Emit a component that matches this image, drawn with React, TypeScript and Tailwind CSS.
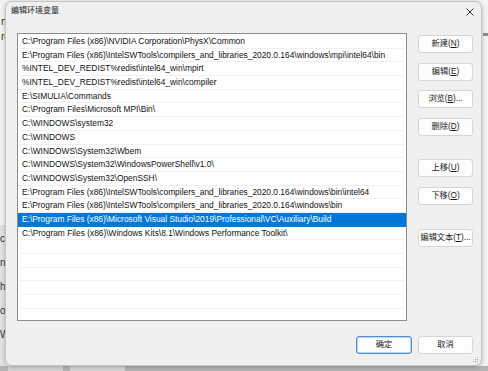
import React from 'react';

const paths = [
  'C:\\Program Files (x86)\\NVIDIA Corporation\\PhysX\\Common',
  'E:\\Program Files (x86)\\IntelSWTools\\compilers_and_libraries_2020.0.164\\windows\\mpi\\intel64\\bin',
  '%INTEL_DEV_REDIST%redist\\intel64_win\\mpirt',
  '%INTEL_DEV_REDIST%redist\\intel64_win\\compiler',
  'E:\\SIMULIA\\Commands',
  'C:\\Program Files\\Microsoft MPI\\Bin\\',
  'C:\\WINDOWS\\system32',
  'C:\\WINDOWS',
  'C:\\WINDOWS\\System32\\Wbem',
  'C:\\WINDOWS\\System32\\WindowsPowerShell\\v1.0\\',
  'C:\\WINDOWS\\System32\\OpenSSH\\',
  'E:\\Program Files (x86)\\IntelSWTools\\compilers_and_libraries_2020.0.164\\windows\\bin\\intel64',
  'E:\\Program Files (x86)\\IntelSWTools\\compilers_and_libraries_2020.0.164\\windows\\bin',
  'E:\\Program Files (x86)\\Microsoft Visual Studio\\2019\\Professional\\VC\\Auxiliary\\Build',
  'C:\\Program Files (x86)\\Windows Kits\\8.1\\Windows Performance Toolkit\\',
];

const SELECTED = 13;
const TOTAL_ROWS = 20;

const font = { fontFamily: '"Liberation Sans", "Noto Sans CJK SC", sans-serif' };

const Btn: React.FC<{ label: string; hot: string; tail?: string; className?: string; primary?: boolean }> = ({
  label,
  hot,
  tail = '',
  className = '',
  primary,
}) => (
  <button
    className={`h-[18px] w-[55px] rounded-[3px] bg-[#fdfdfd] text-[8.2px] leading-none text-[#1b1b1b] flex items-center justify-center whitespace-nowrap ${
      primary ? 'border border-[#4c8fd0] shadow-[inset_0_0_0_0.5px_#7fb0de]' : 'border border-[#d6d6d6]'
    } ${className}`}
  >
    {label}
    {hot && (
      <>
        (<span className="underline underline-offset-1">{hot}</span>)
      </>
    )}
    {tail}
  </button>
);

const App: React.FC = () => {
  const rows = Array.from({ length: TOTAL_ROWS }, (_, i) => paths[i] ?? '');

  return (
    <div className="relative w-[488px] h-[371px] overflow-hidden bg-[#e6e6e6]" style={font}>
      {/* window behind the dialog */}
      <div className="absolute left-0 top-0 w-[488px] h-[366px] bg-[#f3f3f3] text-[10px] text-[#333]">
        <div className="pt-[16px] pl-[1px] flex flex-col gap-[3px] leading-[12px]">
          <span>n</span>
          <span>rq</span>
        </div>
        <div className="absolute right-0 top-[33px] w-[5px] h-[3px] bg-[#8a8a8a]" />
      </div>
      <div className="absolute left-0 top-[225px] w-[6px] h-[141px] bg-[#e2e2e2] text-[10px] text-[#333] leading-[12px]">
        <div className="pt-[8px] flex flex-col gap-[12px]">
          <span>c</span>
          <span>n</span>
          <span>h</span>
          <span>ol</span>
          <span>W</span>
        </div>
      </div>
      <div className="absolute left-0 top-[366px] w-[488px] h-[5px] bg-[#b4b4b4] flex gap-[7px] pl-[8px]">
        <div className="w-[55px] h-full bg-[#d4d4d4]" />
        <div className="w-[55px] h-full bg-[#d4d4d4]" />
      </div>

      {/* dialog */}
      <div className="absolute left-[5px] top-[1px] w-[477px] h-[365px] rounded-[7px] border border-[#c4c4c4] bg-[#f0f0f0] shadow-[0_1px_4px_rgba(0,0,0,0.25)] flex flex-col">
        <div className="h-[31px] flex items-start justify-between pl-[5px] pr-[5px] pt-[3px]">
          <span className="text-[8px] leading-[12px] text-[#1a1a1a]">编辑环境变量</span>
          <svg width="10" height="10" viewBox="0 0 10 10" className="mt-[2px] mr-[1px]">
            <path d="M1.5 1.5 L8.5 8.5 M8.5 1.5 L1.5 8.5" stroke="#222" strokeWidth="0.9" />
          </svg>
        </div>

        <div className="flex pl-[11px] gap-[11px]">
          <div className="w-[390px] h-[288px] border border-[#8c8c8c] bg-white pt-[1px] overflow-hidden">
            {rows.map((p, i) => (
              <div
                key={i}
                className={`h-[13.7px] flex items-center text-[8.4px] whitespace-nowrap overflow-hidden ${
                  i === SELECTED
                    ? 'bg-[#0078d7] text-white pl-[4px]'
                    : 'text-[#111] mx-[2px] pl-[2px] border-b border-[#f0f0f0]'
                }`}
              >
                {p}
              </div>
            ))}
          </div>

          <div className="flex flex-col">
            <Btn label="新建" hot="N" className="mt-[2px]" />
            <Btn label="编辑" hot="E" className="mt-[9.7px]" />
            <Btn label="浏览" hot="B" tail="..." className="mt-[9.8px]" />
            <Btn label="删除" hot="D" className="mt-[9.5px]" />
            <Btn label="上移" hot="U" className="mt-[23.3px]" />
            <Btn label="下移" hot="O" className="mt-[9.7px]" />
            <Btn label="编辑文本" hot="T" tail="..." className="mt-[24.5px]" />
          </div>
        </div>

        <div className="flex justify-end gap-[6px] pr-[8px] mt-[15px]">
          <Btn label="确定" hot="" className="w-[56px]" primary />
          <Btn label="取消" hot="" />
        </div>

        <svg width="6" height="6" viewBox="0 0 6 6" className="absolute right-[2px] bottom-[2px]">
          <rect x="4" y="0" width="1" height="1" fill="#a0a0a0" />
          <rect x="2" y="2" width="1" height="1" fill="#a0a0a0" />
          <rect x="4" y="2" width="1" height="1" fill="#a0a0a0" />
          <rect x="0" y="4" width="1" height="1" fill="#a0a0a0" />
          <rect x="2" y="4" width="1" height="1" fill="#a0a0a0" />
          <rect x="4" y="4" width="1" height="1" fill="#a0a0a0" />
        </svg>
      </div>
    </div>
  );
};

export default App;
